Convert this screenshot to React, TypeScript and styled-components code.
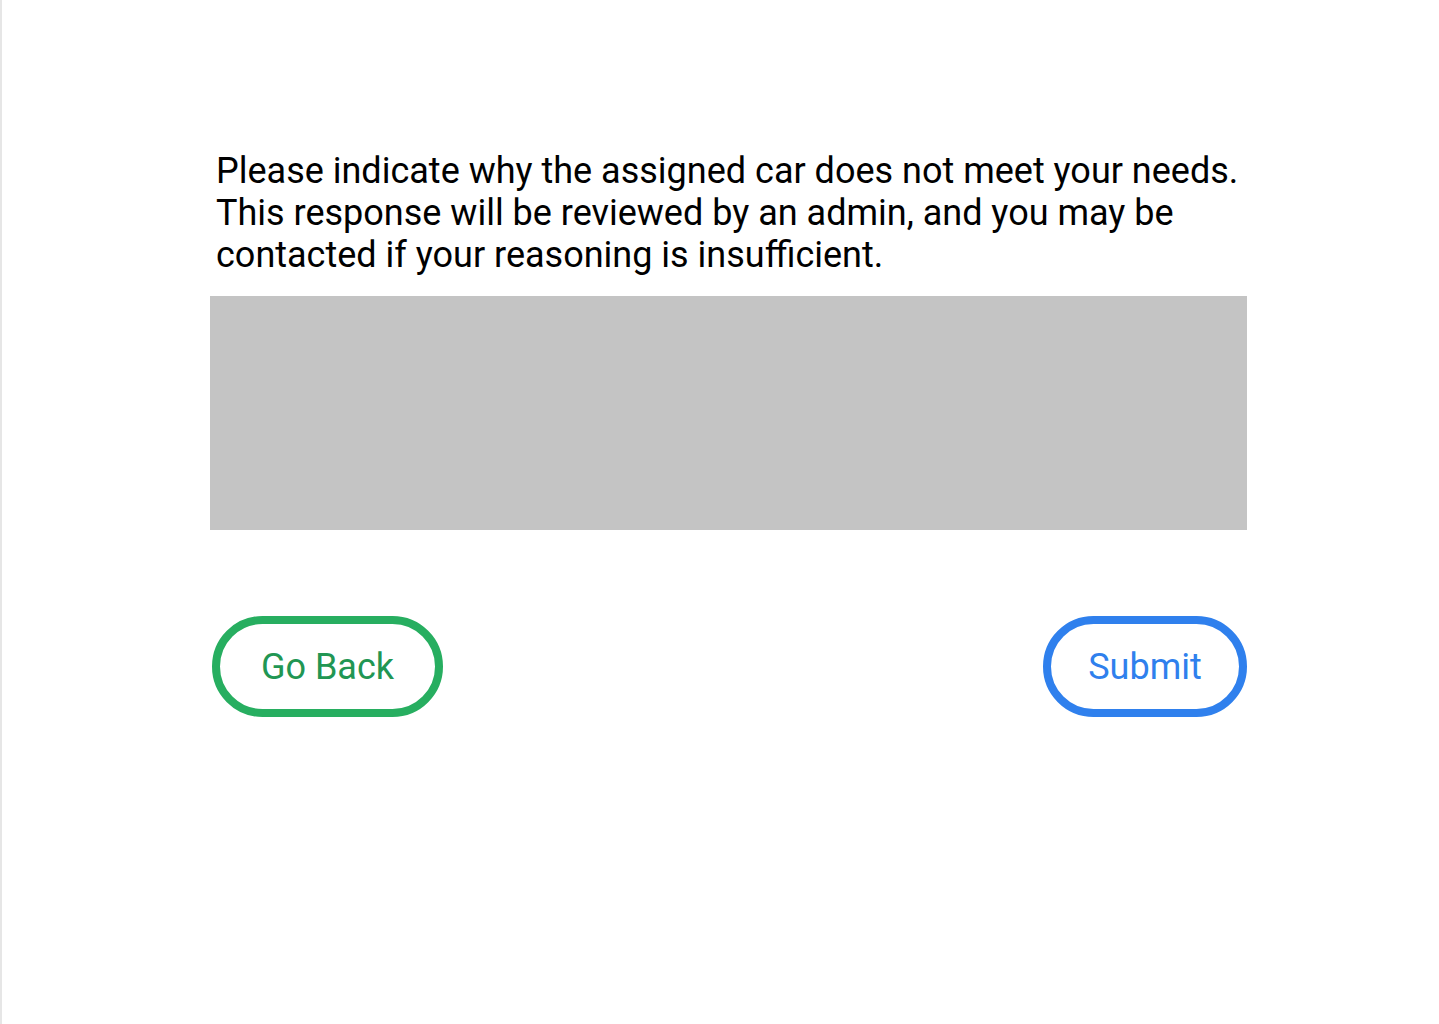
import React from "react";
import styled, { createGlobalStyle } from "styled-components";

const Global = createGlobalStyle`
  html, body { margin: 0; padding: 0; background: #ffffff; }
  body { font-family: Roboto, "Noto Sans", Arial, sans-serif; }
`;

const Page = styled.div`
  box-sizing: border-box;
  min-height: 1024px;
  border-left: 2px solid #e6e6e6;
  padding: 150px 0 0 208px;
`;

const Form = styled.div`
  width: 1037px;
  display: flex;
  flex-direction: column;
`;

const Prompt = styled.p`
  margin: 0 0 20px 6px;
  font-size: 36px;
  line-height: 42px;
  color: #000;
  font-weight: 400;
`;

const Reason = styled.div`
  height: 234px;
  background: #c4c4c4;
`;

const Actions = styled.div`
  margin-top: 86px;
  display: flex;
  justify-content: space-between;
  padding-left: 2px;
`;

const Pill = styled.button<{ $color: string; $text: string; $w: number }>`
  box-sizing: border-box;
  width: ${(p) => p.$w}px;
  height: 101px;
  border: 8px solid ${(p) => p.$color};
  border-radius: 51px;
  background: #fff;
  color: ${(p) => p.$text};
  font-family: Roboto, "Noto Sans", Arial, sans-serif;
  font-size: 36px;
  padding: 0;
  display: flex;
  align-items: center;
  justify-content: center;
  cursor: pointer;
`;

export default function App() {
  return (
    <>
      <Global />
      <Page>
        <Form>
          <Prompt>
            Please indicate why the assigned car does not meet your needs.
            <br />
            This response will be reviewed by an admin, and you may be
            <br />
            contacted if your reasoning is insufficient.
          </Prompt>
          <Reason />
          <Actions>
            <Pill $color="#27ae60" $text="#219653" $w={231}>Go Back</Pill>
            <Pill $color="#2f80ed" $text="#2f80ed" $w={204}>Submit</Pill>
          </Actions>
        </Form>
      </Page>
    </>
  );
}
